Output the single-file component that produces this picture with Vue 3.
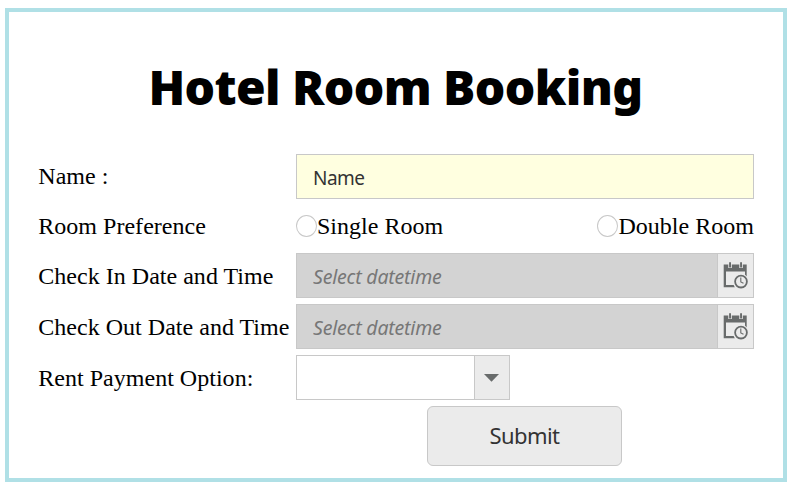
<script setup>
import { ref } from 'vue'

const name = ref('Name')
const room = ref('')
const rooms = ['Single Room', 'Double Room']
const dates = ref([
  { label: 'Check In Date and Time', value: '' },
  { label: 'Check Out Date and Time', value: '' },
])
</script>

<template>
  <form class="booking" @submit.prevent>
    <h1 class="title">Hotel Room Booking</h1>
    <div class="fields">
      <label class="label first">Name :</label>
      <input v-model="name" class="box name" type="text" />

      <span class="label">Room Preference</span>
      <div class="rooms">
        <label v-for="item in rooms" :key="item" class="room">
          <input v-model="room" class="radio" type="radio" :value="item" />{{ item }}
        </label>
      </div>

      <template v-for="date in dates" :key="date.label">
        <label class="label">{{ date.label }}</label>
        <div class="box combo date">
          <input v-model="date.value" class="entry" type="text" placeholder="Select datetime" />
          <span class="trigger">
            <svg width="25" height="27" viewBox="0 0 25 27">
              <path d="M.7 2.5H23.7V14.5A7.6 7.6 0 0 0 22 12.8V9.5H3V23H10.7A8 8 0 0 0 11.9 25.3H.7Z" fill="#686b6b" />
              <path d="M5.3 0h3.5v6H5.3zM16.3 0h3.5v6h-3.5z" fill="#ebebeb" />
              <path d="M6.1 .3h1.9v5.1H6.1zM17.1 .3h1.9v5.1h-1.9z" fill="#686b6b" />
              <circle cx="18" cy="19.6" r="5.9" fill="#ebebeb" stroke="#686b6b" stroke-width="1.8" />
              <path d="M17.8 15.6V19.9L20.5 21.2" fill="none" stroke="#686b6b" stroke-width="1.1" />
            </svg>
          </span>
        </div>
      </template>

      <label class="label">Rent Payment Option:</label>
      <div class="box combo payment">
        <span class="entry"></span>
        <span class="trigger">
          <svg width="15" height="8" viewBox="0 0 15 8"><path d="M0 0H15L7.5 7.7Z" fill="#686b6b" /></svg>
        </span>
      </div>
    </div>
    <button class="submit" type="submit">Submit</button>
  </form>
</template>

<style>
body {
  background: #fff;
}
</style>

<style scoped>
.booking {
  box-sizing: border-box;
  width: 782px;
  height: 474px;
  margin: 8px 0 0 5px;
  padding: 0 29px;
  border: 4px solid #b0e0e6;
  display: flex;
  flex-direction: column;
  color: #000;
  font: 24px/28px "Liberation Serif", serif;
  letter-spacing: 0.02px;
}
.title {
  margin: 42px 0 34px;
  height: 66px;
  padding-right: 1px;
  text-align: center;
  white-space: nowrap;
  font: 900 48px/66px "Noto Sans", "Open Sans", sans-serif;
  letter-spacing: -0.6px;
}
.fields {
  display: grid;
  grid-template-columns: 258px 458px;
  grid-template-rows: 45px 42px 45px 45px 45px;
  row-gap: 6px;
  align-items: center;
}
.label {
  padding-left: 0.3px;
  white-space: nowrap;
}
.first {
  padding-bottom: 2px;
}
.box {
  box-sizing: border-box;
  height: 45px;
  border: 1px solid #c8c8c8;
  border-radius: 0;
}
.name {
  width: 458px;
  margin: 0;
  padding: 3px 16px 0;
  background: #ffffe0;
  color: #333;
  font: 19px "Noto Sans", sans-serif;
  letter-spacing: -0.5px;
  outline: none;
}
.rooms {
  display: flex;
  justify-content: space-between;
}
.room {
  display: flex;
  align-items: center;
}
.radio {
  appearance: none;
  box-sizing: border-box;
  width: 21px;
  height: 22px;
  margin: 0;
  border: 1px solid #c8c8c8;
  border-radius: 50%;
  background: #fff;
}
.combo {
  display: flex;
}
.entry {
  flex: 1;
  min-width: 0;
  border: 0;
  margin: 0;
  padding: 1px 16px 0;
  background: none;
  font: italic 19.5px "Noto Sans", sans-serif;
  letter-spacing: -0.2px;
  outline: none;
}
.entry::placeholder {
  color: #777;
  opacity: 1;
}
.date {
  background: #d3d3d3;
}
.trigger {
  box-sizing: border-box;
  width: 36px;
  display: flex;
  align-items: center;
  justify-content: center;
  background: #ebebeb;
  border-left: 1px solid #c8c8c8;
}
.payment {
  width: 214px;
}
.payment .trigger {
  width: 35px;
  padding-right: 1px;
}
.submit {
  box-sizing: border-box;
  width: 195px;
  height: 60px;
  margin: 6px 0 0 389px;
  padding: 0 0 2px;
  border: 1px solid #c8c8c8;
  border-radius: 6px;
  background: #ebebeb;
  color: #333;
  font: 22px "Noto Sans", sans-serif;
  letter-spacing: -0.6px;
}
</style>
